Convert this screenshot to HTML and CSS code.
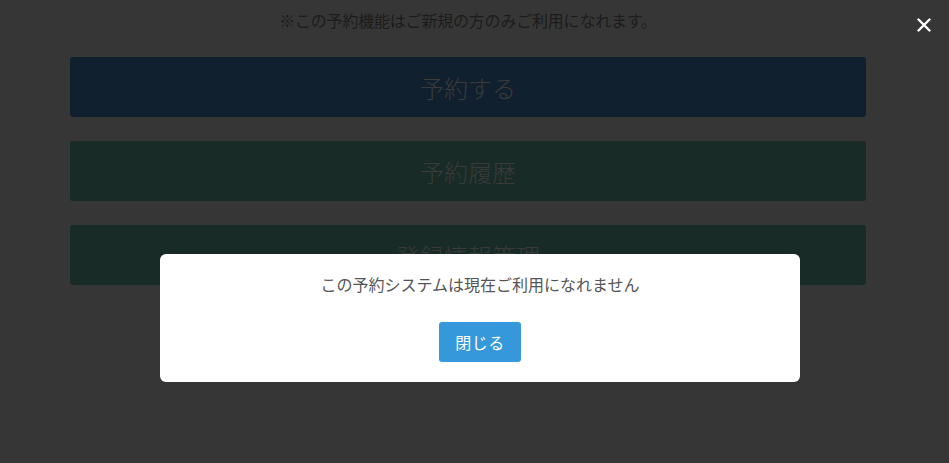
FILE: index.html
```html
<!DOCTYPE html>
<html lang="ja">
<head>
<meta charset="utf-8">
<link rel="stylesheet" href="styles.css">
</head>
<body>
<div class="page">
  <p class="notice">※この予約機能はご新規の方のみご利用になれます。</p>
  <div class="menu">
    <a class="menu-btn blue">予約する</a>
    <a class="menu-btn green">予約履歴</a>
    <a class="menu-btn green">登録情報管理</a>
  </div>
</div>
<button class="close-x" aria-label="close">
  <svg width="14" height="14" viewBox="0 0 14 14"><path d="M1.5 1.5 L12.5 12.5 M12.5 1.5 L1.5 12.5" stroke="#fff" stroke-width="2.4" stroke-linecap="round"/></svg>
</button>
<div class="modal">
  <p class="modal-text">この予約システムは現在ご利用になれません</p>
  <button class="modal-btn">閉じる</button>
</div>
</body>
</html>
```
FILE: styles.css
```css
html, body {
  margin: 0;
  padding: 0;
  height: 100%;
}
body {
  background: #363636;
  font-family: "Noto Sans CJK JP", "Noto Sans", sans-serif;
  overflow: hidden;
}
.page {
  width: 796px;
  padding: 9px 0 0 70px;
}
.notice {
  margin: 0;
  text-align: center;
  font-size: 16px;
  line-height: 22px;
  letter-spacing: -0.2px;
  color: #1c1c1c;
}
.menu {
  display: flex;
  flex-direction: column;
  gap: 24px;
  margin-top: 26px;
}
.menu-btn {
  display: flex;
  align-items: center;
  justify-content: center;
  height: 60px;
  border-radius: 3px;
  font-size: 24px;
  font-weight: 300;
  color: #3a3a3a;
}
.menu-btn.blue { background: #11202f; }
.menu-btn.green { background: #192b27; }
.close-x {
  position: fixed;
  top: 18px;
  right: 18px;
  width: 14px;
  height: 14px;
  padding: 0;
  border: 0;
  background: none;
  display: flex;
}
.modal {
  position: absolute;
  left: 160px;
  top: 254px;
  width: 640px;
  height: 128px;
  box-sizing: border-box;
  background: #fff;
  border-radius: 6px;
  padding-top: 18px;
  display: flex;
  flex-direction: column;
  align-items: center;
}
.modal-text {
  margin: 0;
  font-size: 16px;
  line-height: 24px;
  color: #555;
}
.modal-btn {
  margin-top: 26px;
  width: 82px;
  height: 40px;
  border: 0;
  border-radius: 3px;
  background: #3498db;
  color: #fff;
  font-family: inherit;
  font-size: 16px;
  letter-spacing: 0.5px;
}
```
